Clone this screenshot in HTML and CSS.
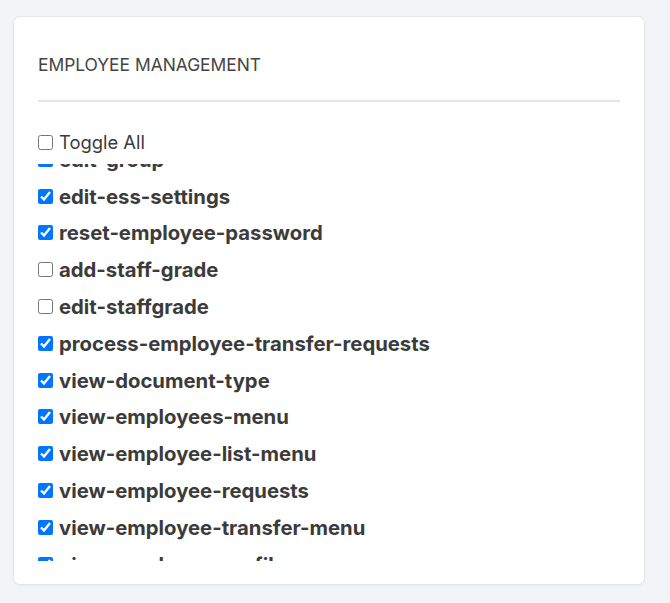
FILE: index.html
```html
<!DOCTYPE html>
<html lang="en">
<head>
    <meta charset="UTF-8">
    <meta name="viewport" content="width=device-width, initial-scale=1.0">
    <title>Employee Management Permissions</title>
    <link rel="stylesheet" href="styles.css">
</head>
<body>
    <div class="card">
        <h3 class="card-title">Employee Management</h3>
        <hr class="divider">

        <label class="toggle-all">
            <input type="checkbox" id="toggle-all"><span>Toggle All</span>
        </label>

        <div class="perm-list" id="perm-list">
            <label class="perm"><input type="checkbox" checked><span>view-employees</span></label>
            <label class="perm"><input type="checkbox" checked><span>add-employee</span></label>
            <label class="perm"><input type="checkbox" checked><span>edit-employee</span></label>
            <label class="perm"><input type="checkbox" checked><span>delete-employee</span></label>
            <label class="perm"><input type="checkbox" checked><span>add-group</span></label>
            <label class="perm"><input type="checkbox" checked><span>edit-group</span></label>
            <label class="perm"><input type="checkbox" checked><span>edit-ess-settings</span></label>
            <label class="perm"><input type="checkbox" checked><span>reset-employee-password</span></label>
            <label class="perm"><input type="checkbox"><span>add-staff-grade</span></label>
            <label class="perm"><input type="checkbox"><span>edit-staffgrade</span></label>
            <label class="perm"><input type="checkbox" checked><span>process-employee-transfer-requests</span></label>
            <label class="perm"><input type="checkbox" checked><span>view-document-type</span></label>
            <label class="perm"><input type="checkbox" checked><span>view-employees-menu</span></label>
            <label class="perm"><input type="checkbox" checked><span>view-employee-list-menu</span></label>
            <label class="perm"><input type="checkbox" checked><span>view-employee-requests</span></label>
            <label class="perm"><input type="checkbox" checked><span>view-employee-transfer-menu</span></label>
            <label class="perm"><input type="checkbox" checked><span>view-employee-profile</span></label>
            <label class="perm"><input type="checkbox" checked><span>view-employee-documents</span></label>
        </div>
    </div>

    <script>
        const list = document.getElementById('perm-list');
        const boxes = list.querySelectorAll('input[type="checkbox"]');

        document.getElementById('toggle-all').addEventListener('change', function () {
            boxes.forEach(b => b.checked = this.checked);
        });

        list.scrollTop = 207;
    </script>
</body>
</html>
```

FILE: styles.css
```css
body { margin: 0; padding: 16px 25px 20px 13px; background: #f3f4f8; font-family: "Inter", "Liberation Sans", sans-serif; color: #3b3b3b; }
.card { background: #fff; border: 1px solid #e4e6ea; border-radius: 7px; box-shadow: 0 1px 3px rgba(0, 0, 0, 0.04); padding: 36px 24px 23px 24px; }
.card-title { margin: 0; font-size: 17.4px; font-weight: 400; text-transform: uppercase; color: #444; line-height: 24px; }
.divider { border: none; border-top: 2px solid #e6e6e6; margin: 23px 0 29px; }
.toggle-all { display: flex; align-items: center; gap: 6px; font-size: 18.4px; line-height: 22px; color: #3b3b3b; }
.perm-list { height: 397px; overflow-y: auto; scrollbar-width: none; margin-top: 11px; }
.perm-list::-webkit-scrollbar { display: none; }
.perm { display: flex; align-items: center; gap: 6px; height: 36.8px; font-size: 20.3px; font-weight: 700; color: #3b3b3b; }
input[type="checkbox"] { width: 15px; height: 15px; margin: 0; flex-shrink: 0; }
```
